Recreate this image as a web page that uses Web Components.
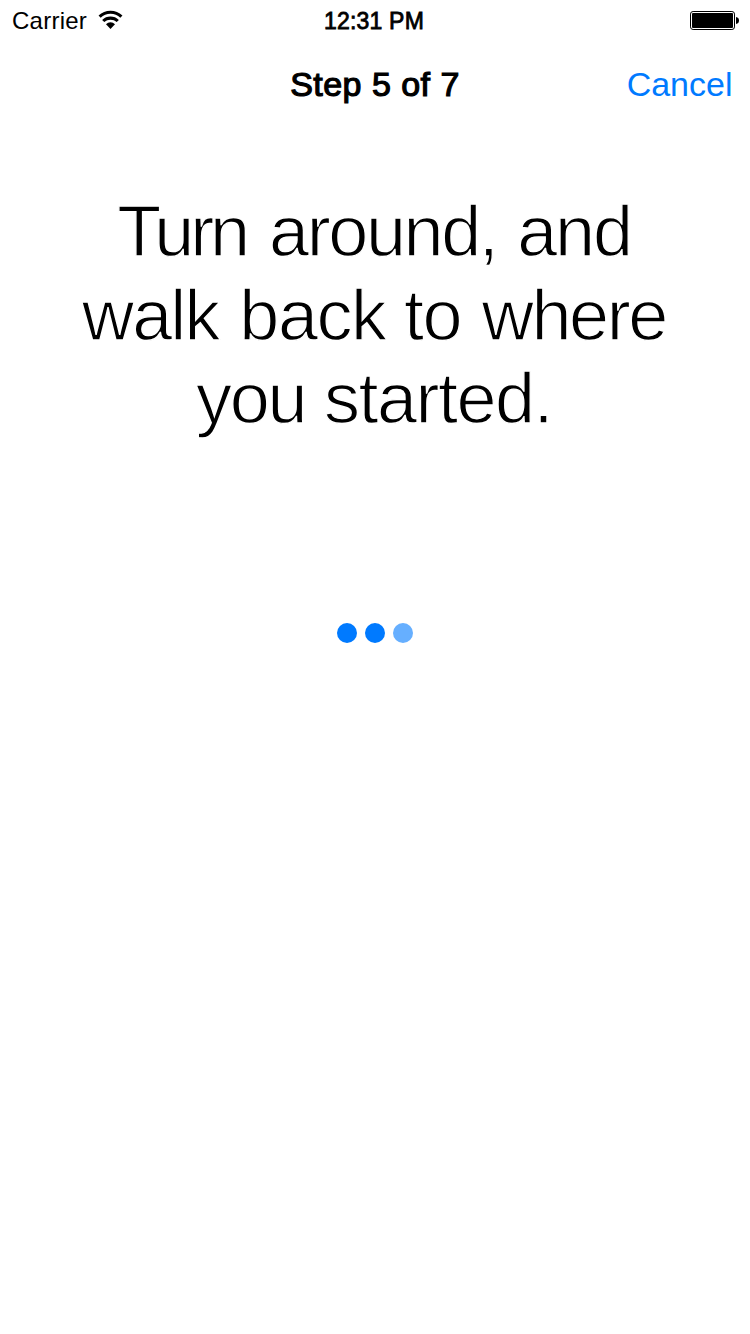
<!DOCTYPE html>
<html lang="en">
<head>
<meta charset="utf-8">
<title>Step 5 of 7</title>
<style>
  html, body { margin: 0; background: #fff; }
  body { font-family: "Liberation Sans", Arial, sans-serif; color: #000; }
</style>
</head>
<body>
<walk-screen></walk-screen>
<script>
function define(name, html) {
  const template = document.createElement('template');
  template.innerHTML = html;
  customElements.define(name, class extends HTMLElement {
    constructor() {
      super();
      this.attachShadow({ mode: 'open' }).append(template.content.cloneNode(true));
    }
  });
}

define('wifi-icon', `
  <style>:host{display:block;width:26px;height:20px} svg{display:block}</style>
  <svg width="26" height="20" viewBox="0 0 26 20" fill="none" stroke="#000" stroke-width="3.1">
    <path d="M1.6 6.6A16 16 0 0 1 23.4 6.6"/>
    <path d="M5.2 11A10.6 10.6 0 0 1 19.8 11"/>
    <path d="M12.5 18.9L8 14.2A6.4 6.4 0 0 1 17 14.2Z" fill="#000" stroke="none"/>
  </svg>`);

define('battery-icon', `
  <style>:host{display:block;width:49px;height:19px} svg{display:block}</style>
  <svg width="49" height="19" viewBox="0 0 49 19">
    <rect x=".5" y=".5" width="44" height="18" rx="2.6" fill="none" stroke="#000"/>
    <rect x="2" y="2" width="41" height="15" rx="1" fill="#000"/>
    <path d="M46 6C48 6.3 49 7.5 49 9.5S48 12.7 46 13Z" fill="#000"/>
  </svg>`);

define('status-bar', `
  <style>
    :host{display:grid;grid-template-columns:1fr auto 1fr;align-items:center;height:40px;padding:0 11px 0 12px;font-size:24px;line-height:40px;box-sizing:border-box}
    .left{display:flex;align-items:center;gap:11px}
    .carrier{letter-spacing:.25px}
    .carrier,.time{padding-top:2px;line-height:38px}
    .time{font-size:23px;-webkit-text-stroke:.8px #000;letter-spacing:.2px;margin-right:3px}
    battery-icon{justify-self:end}
  </style>
  <div class="left"><span class="carrier">Carrier</span><wifi-icon></wifi-icon></div>
  <span class="time">12:31 PM</span>
  <battery-icon></battery-icon>`);

define('nav-bar', `
  <style>
    :host{display:grid;grid-template-columns:1fr auto 1fr;align-items:center;height:88px;padding:0 17.5px;font-size:34px;line-height:40px;box-sizing:border-box}
    .title{grid-column:2;-webkit-text-stroke:1.2px #000;letter-spacing:.48px}
    .action{justify-self:end;color:#007aff}
  </style>
  <span class="title"><slot name="title"></slot></span>
  <span class="action"><slot name="action"></slot></span>`);

/* Regular weight slimmed by a background-coloured outline to give a light face. */
define('light-heading', `
  <style>
    :host{display:flex;flex-direction:column;align-items:center;font-size:72px;line-height:83.5px;-webkit-text-stroke:1.3px #fff;white-space:pre}
    div{margin-right:2px}
    .a{letter-spacing:-2.2px} .turn{letter-spacing:-4.2px} .around{letter-spacing:-2.4px}
    .gap{letter-spacing:3.2px} .comma{letter-spacing:-.8px}
    .b{letter-spacing:-1.5px} .walk{letter-spacing:-1.9px} .where{letter-spacing:-2.4px} .wide{letter-spacing:.8px}
    .c{letter-spacing:-1.5px} .you{letter-spacing:-2.2px}
  </style>
  <div class="a"><span class="turn">Turn</span><span class="gap"> </span><span class="around">around</span><span class="comma">, </span>and</div>
  <div class="b"><span class="walk">walk</span><span class="wide"> </span>back to<span class="wide"> </span><span class="where">where</span></div>
  <div class="c"><span class="you">you</span> started.</div>`);

define('progress-dots', `
  <style>
    :host{display:flex;justify-content:center;gap:8px}
    i{width:20px;height:20px;border-radius:50%;background:#007aff}
    i:last-child{background:#66afff}
  </style><i></i><i></i><i></i>`);

define('walk-screen', `
  <style>
    :host{display:flex;flex-direction:column;height:1334px;background:#fff;overflow:hidden}
    light-heading{margin-top:62px}
    progress-dots{margin-top:182.5px}
  </style>
  <status-bar></status-bar>
  <nav-bar><span slot="title">Step 5 of 7</span><span slot="action">Cancel</span></nav-bar>
  <light-heading></light-heading>
  <progress-dots></progress-dots>`);
</script>
</body>
</html>
